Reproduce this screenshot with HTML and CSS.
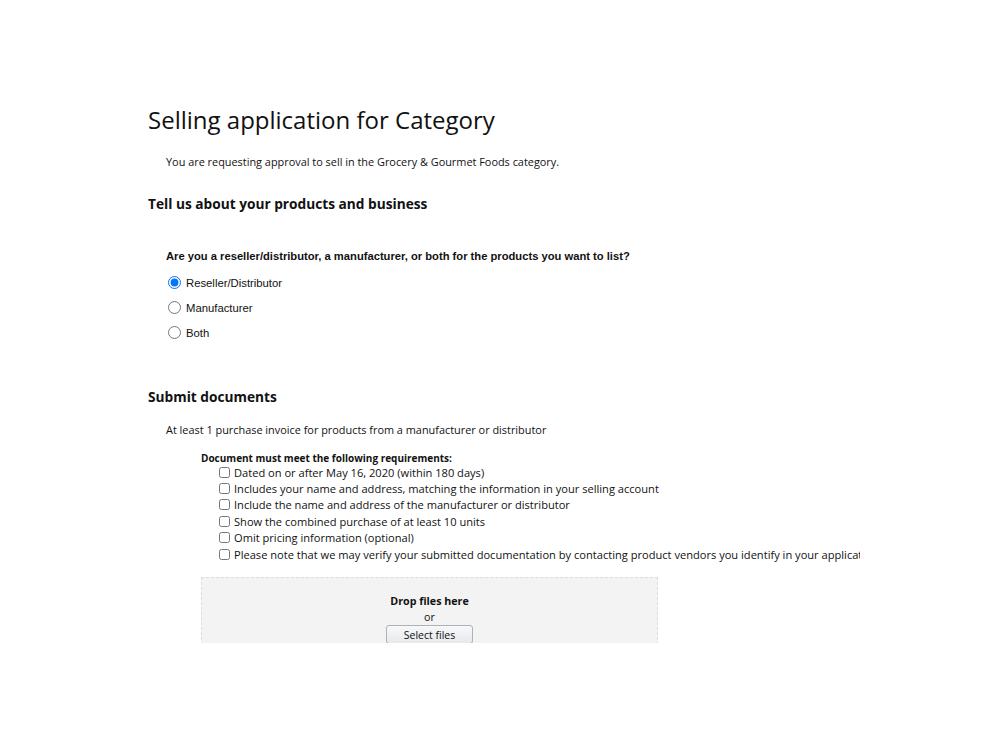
FILE: index.html
```html
<!DOCTYPE html>
<html>
<head>
    <link rel="stylesheet" href="styles.css">
</head>
<body>
    <!-- clipped view of the application form -->
    <div class="frame">
        <h1 class="title">Selling application for Category</h1>
        <p class="intro">You are requesting approval to sell in the Grocery &amp; Gourmet Foods category.</p>

        <h2 class="section-title">Tell us about your products and business</h2>
        <div class="question">
            <p class="question-text">Are you a reseller/distributor, a manufacturer, or both for the products you want to list?</p>
            <label class="radio-row"><input type="radio" name="role" checked> Reseller/Distributor</label>
            <label class="radio-row"><input type="radio" name="role"> Manufacturer</label>
            <label class="radio-row"><input type="radio" name="role"> Both</label>
        </div>

        <h2 class="section-title docs-title">Submit documents</h2>
        <p class="intro docs-intro">At least 1 purchase invoice for products from a manufacturer or distributor</p>

        <div class="requirements">
            <p class="req-title">Document must meet the following requirements:</p>
            <ul class="req-list">
                <li><input type="checkbox"> Dated on or after May 16, 2020 (within 180 days)</li>
                <li><input type="checkbox"> Includes your name and address, matching the information in your selling account</li>
                <li><input type="checkbox"> Include the name and address of the manufacturer or distributor</li>
                <li><input type="checkbox"> Show the combined purchase of at least 10 units</li>
                <li><input type="checkbox"> Omit pricing information (optional)</li>
                <li><input type="checkbox"> Please note that we may verify your submitted documentation by contacting product vendors you identify in your application</li>
            </ul>

            <div class="dropzone">
                <div class="drop-label">Drop files here</div>
                <div class="drop-or">or</div>
                <button class="select-btn">Select files</button>
            </div>
        </div>
    </div>
</body>
</html>
```

FILE: styles.css
```css
/* page */
body {
    margin: 0;
    background: #fff;
    color: #111;
    font-family: "Open Sans", "Noto Sans", sans-serif;
}

.frame {
    box-sizing: border-box;
    margin-left: 148px;
    width: 712px;
    height: 643px;
    overflow: hidden;
    padding-top: 103px;
}

.title {
    margin: 0;
    font-size: 24px;
    font-weight: 400;
    line-height: 34px;
}

.intro {
    margin: 17px 0 0 18px;
    font-size: 10.9px;
    line-height: 16px;
}

.section-title {
    margin: 24px 0 0;
    font-size: 13.7px;
    font-weight: 700;
    line-height: 20px;
}

.docs-title {
    margin-top: 42px;
}

.docs-intro {
    margin-top: 15px;
}

/* reseller question */
.question {
    margin: 34px 0 0 18px;
    font-family: "Liberation Sans", Arial, sans-serif;
}

.question-text {
    margin: 0 0 6px;
    font-size: 11.2px;
    font-weight: 700;
    line-height: 16px;
}

.radio-row {
    display: flex;
    align-items: center;
    height: 25px;
    font-size: 11.3px;
}

.radio-row input {
    margin: 0 5px 0 2px;
    width: 13px;
    height: 13px;
}

/* document requirements */
.requirements {
    margin: 14px 0 0 53px;
}

.req-title {
    margin: 0;
    font-size: 10px;
    font-weight: 700;
    line-height: 12px;
}

.req-list {
    list-style: none;
    margin: 0;
    padding: 0 0 0 18px;
    font-size: 11.1px;
}

.req-list li {
    display: flex;
    align-items: center;
    height: 16.4px;
    white-space: nowrap;
}

.req-list input {
    margin: 0 4px 0 0;
    width: 11px;
    height: 11px;
}

.dropzone {
    margin-top: 15px;
    width: 457px;
    padding: 15px 0 10px;
    background: #f3f3f3;
    border: 1px dashed #dcdcdc;
    box-sizing: border-box;
    text-align: center;
    font-size: 10.7px;
}

.drop-label {
    font-weight: 700;
    line-height: 16px;
}

.drop-or {
    line-height: 16px;
}

.select-btn {
    margin-top: 0;
    width: 87px;
    height: 19px;
    padding: 0;
    font-family: inherit;
    font-size: 10.5px;
    color: #111;
    background: linear-gradient(#f7f8fa, #e7e9ec);
    border: 1px solid #adb1b8;
    border-radius: 3px;
}
```
